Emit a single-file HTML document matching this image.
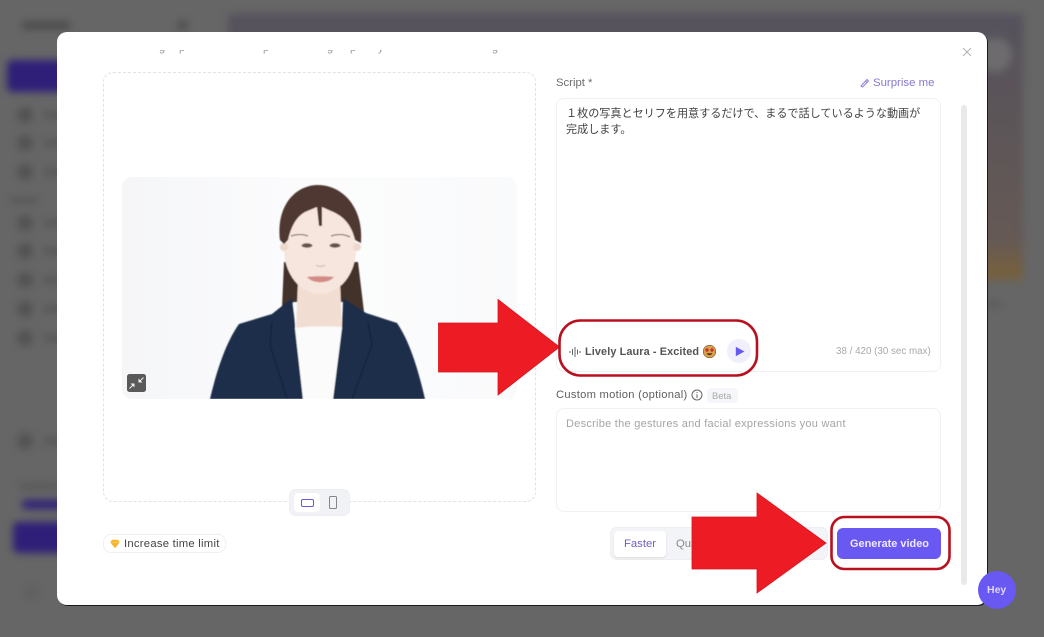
<!DOCTYPE html>
<html><head><meta charset="utf-8"><style>
*{box-sizing:border-box}
html,body{margin:0;padding:0}
body{width:1044px;height:637px;overflow:hidden;position:relative;background:#666;font-family:"Liberation Sans","Noto Sans CJK JP",sans-serif}
.a{position:absolute}
.t{position:absolute;white-space:nowrap;line-height:14px}
#bg{position:absolute;inset:0;filter:blur(4px)}
.ic{position:absolute;left:17px;width:16px;height:16px;border-radius:8px;background:#525252}
.lb{position:absolute;left:44px;width:30px;height:6px;background:#555}
.d{position:absolute;overflow:hidden;height:4px;top:50px;width:8px;color:#999;font-size:11px;line-height:0}
.d span{position:absolute;left:0;top:-2px;line-height:0}
.box{position:absolute;background:#fff;border:1px solid #f1f1f3;border-radius:8px}
</style></head><body>
<div id="bg">
<div class="a" style="left:228px;top:14px;width:795px;height:266px;background:linear-gradient(180deg,#55525d 0%,#5c5558 40%,#655955 85%,#75603f 97%,#75603f 100%)"></div>
<div class="a" style="left:978px;top:38px;width:34px;height:34px;border-radius:50%;background:#6d6b6e"></div>
<div class="a" style="left:22px;top:22px;width:48px;height:7px;background:#484848"></div>
<div class="a" style="left:178px;top:21px;width:9px;height:9px;background:#4d4d4d"></div>
<div class="a" style="left:7px;top:60px;width:70px;height:32px;border-radius:5px;background:#2f1f78"></div>
<div class="ic" style="top:107px"></div><div class="lb" style="top:112px"></div>
<div class="ic" style="top:135px"></div><div class="lb" style="top:140px"></div>
<div class="ic" style="top:164px"></div><div class="lb" style="top:169px"></div>
<div class="a" style="left:10px;top:198px;width:28px;height:5px;background:#555"></div>
<div class="ic" style="top:215px"></div><div class="lb" style="top:220px"></div>
<div class="ic" style="top:243px"></div><div class="lb" style="top:248px"></div>
<div class="ic" style="top:272px"></div><div class="lb" style="top:277px"></div>
<div class="ic" style="top:301px"></div><div class="lb" style="top:306px"></div>
<div class="ic" style="top:330px"></div><div class="lb" style="top:335px"></div>
<div class="ic" style="top:433px"></div><div class="lb" style="top:438px"></div>
<div class="a" style="left:20px;top:484px;width:40px;height:5px;background:#555"></div>
<div class="a" style="left:22px;top:500px;width:50px;height:9px;border-radius:4px;background:#2f1f78"></div>
<div class="a" style="left:13px;top:522px;width:70px;height:31px;border-radius:5px;background:#2f1f78"></div>
<div class="a" style="left:24px;top:585px;width:15px;height:15px;border-radius:8px;background:#606060"></div>
<div class="a" style="left:985px;top:302px;width:16px;height:5px;background:#585858"></div>
</div>

<div class="a" style="left:58px;top:33px;width:930px;height:573px;border-radius:10px;background:#1a1a1a"></div>
<div class="a" style="left:57px;top:32px;width:930px;height:573px;border-radius:10px;background:#fff"></div>

<div class="d" style="left:159px"><span>g</span></div>
<div class="d" style="left:179px"><span>p</span></div>
<div class="d" style="left:263px"><span>p</span></div>
<div class="d" style="left:327px"><span>g</span></div>
<div class="d" style="left:350px"><span>p</span></div>
<div class="d" style="left:378px"><span>y</span></div>
<div class="d" style="left:492px"><span>g</span></div>

<svg class="a" style="left:962px;top:47px" width="10" height="10" viewBox="0 0 10 10"><path d="M1 1L9 9M9 1L1 9" stroke="#b5b5b5" stroke-width="1.1" fill="none"/></svg>

<div class="a" style="left:103px;top:72px;width:433px;height:430px;border:1px dashed #e2e2e2;border-radius:10px"></div>

<svg class="a" style="left:122px;top:177px;border-radius:10px" width="395" height="222" viewBox="122 177 395 222">
<defs><linearGradient id="g" x1="0" x2="1" y1="0" y2="0"><stop offset="0" stop-color="#f5f6f8"/><stop offset=".5" stop-color="#fcfcfd"/><stop offset="1" stop-color="#f9fafb"/></linearGradient>
<filter id="s"><feGaussianBlur stdDeviation=".5"/></filter></defs>
<rect x="122" y="177" width="395" height="222" fill="url(#g)"/>
<g filter="url(#s)">
<path d="M284 262L282 308L294 302L345 302L364 312L358 262Z" fill="#43302a"/>
<path d="M298 280L296 330L342 330L340 280Z" fill="#f2ddd2"/>
<ellipse cx="320" cy="249" rx="36" ry="45" fill="#f6e6de"/>
<circle cx="284" cy="247" r="4" fill="#efd9cd"/><circle cx="357" cy="247" r="4" fill="#efd9cd"/>
<path d="M280 240C276 205 296 185 318 185C342 185 364 207 361 243L355 240C352 226 344 216 331 211L322 207L322 226L319 226L317 207L305 212C296 217 291 227 288 240L284 244Z" fill="#503730"/>
<path d="M291 236C297 234 303 234 308 236M331 236C337 234 344 234 350 237" stroke="#6f5850" stroke-width="1" fill="none"/>
<ellipse cx="307" cy="245.500" rx="5.500" ry="2.200" fill="#64524b"/><ellipse cx="335" cy="245.500" rx="5.500" ry="2.200" fill="#64524b"/>
<path d="M316 265C319 267 322 267 325 265" stroke="#cdb0a2" stroke-width="1" fill="none"/>
<path d="M307 277C315 276 325 276 334 277C328 284 313 284 307 277Z" fill="#d38b85"/>
<path d="M210 399C215 378 224 345 239 324L272 314L292 298C293 310 295 320 295 328L303 399Z" fill="#1f2d48"/>
<path d="M425 399C420 378 412 345 397 323L366 313L343 298C343 310 342 320 342 328L333 399Z" fill="#1f2d48"/>
<path d="M295 328C311 326 327 326 342 327L333 399L303 399Z" fill="#fbfbfb"/>
<path d="M272 322L270 345L287 399M368 322L372 345L352 399" stroke="#18233a" stroke-width="1.100" fill="none"/>
</g>
<rect x="127" y="374" width="19" height="18" rx="2.500" fill="#5a5a5a"/>
<path d="M138.500 378.500V382.500H142.500ZM134.500 387.500V383.500H130.500Z" fill="#eee"/>
<path d="M140 381L143.500 377.500M133 385L129.500 388.500" stroke="#eee" stroke-width="1" fill="none"/>
</svg>

<div class="a" style="left:290px;top:490px;width:59px;height:25px;border-radius:6px;background:#f1f2f5;box-shadow:0 0 0 1px #eeeef1"></div>
<div class="a" style="left:294px;top:493px;width:26px;height:19px;border-radius:4px;background:#fff"></div>
<div class="a" style="left:301px;top:499px;width:13px;height:8px;border:1.500px solid #6a58d8;border-radius:2px"></div>
<div class="a" style="left:329px;top:496px;width:8px;height:13px;border:1.100px solid #858585;border-radius:1.500px"></div>

<div class="a" style="left:103px;top:534px;width:123px;height:19px;border:1px solid #f0f0f2;border-radius:8px"></div>
<svg class="a" style="left:110px;top:539px" width="10" height="10" viewBox="0 0 10 10"><path d="M2 .8H8L9.800 3.200L5 9.200L.2 3.200Z" fill="#f7b52c"/><path d="M.2 3.200H9.800" stroke="#fbd679" stroke-width=".7"/></svg>
<div class="t" style="left:124px;top:537px;font-size:11.300px;color:#444;letter-spacing:.24px">Increase time limit</div>

<div class="t" style="left:556px;top:76px;font-size:11.300px;color:#6c6c6c">Script *</div>
<svg class="a" style="left:859px;top:77px" width="11" height="11" viewBox="0 0 11 11"><path d="M2 9L8 2.500L9.500 4L3.500 10ZM6.500 4L8 5.500" stroke="#8b80d6" stroke-width="1" fill="none"/></svg>
<div class="t" style="left:873px;top:76px;font-size:11.400px;color:#8578d2">Surprise me</div>

<div class="box" style="left:556px;top:98px;width:385px;height:274px"></div>
<div class="a" style="left:566px;top:105.500px;width:362px;font-size:11.100px;line-height:16px;color:#404040">１枚の写真とセリフを用意するだけで、まるで話しているような動画が<br>完成します。</div>

<svg class="a" style="left:569px;top:346px" width="13" height="12" viewBox="0 0 13 12"><path d="M1 5V7M3.500 3V9M6 1V11M8.500 3.500V8.500M11 5V7" stroke="#666" stroke-width="1" fill="none"/></svg>
<div class="t" style="left:585px;top:345px;font-size:10.900px;font-weight:700;color:#555;letter-spacing:.1px">Lively Laura - Excited</div>
<svg class="a" style="left:703px;top:345px" width="13" height="13" viewBox="0 0 13 13"><circle cx="6.500" cy="6.500" r="6.300" fill="#d9a14a"/><circle cx="6.500" cy="6.500" r="6.300" fill="none" stroke="#6a4a2a" stroke-width=".6"/><circle cx="4" cy="5" r="1.700" fill="#c4352b"/><circle cx="9" cy="5" r="1.700" fill="#c4352b"/><path d="M3.500 8.200C5 10.800 8 10.800 9.500 8.200Z" fill="#5a2e1e"/></svg>
<div class="a" style="left:727px;top:339px;width:24px;height:24px;border-radius:50%;background:#f1effc"></div>
<svg class="a" style="left:735px;top:346px" width="10" height="11" viewBox="0 0 10 11"><path d="M.8 .8L9.400 5.500L.8 10.200Z" fill="#6a58f2"/></svg>
<div class="t" style="left:836px;top:345px;font-size:9.800px;color:#a9a9a9">38 / 420 (30 sec max)</div>

<div class="t" style="left:556px;top:388px;font-size:11.200px;color:#5f5f5f;letter-spacing:.27px">Custom motion (optional)</div>
<svg class="a" style="left:691px;top:389px" width="12" height="12" viewBox="0 0 12 12"><circle cx="6" cy="6" r="5" fill="none" stroke="#666" stroke-width="1"/><path d="M6 5.200V9M6 3V4" stroke="#666" stroke-width="1"/></svg>
<div class="a" style="left:707px;top:388px;width:31px;height:15px;border-radius:4px;background:#f5f6f9"></div>
<div class="t" style="left:712px;top:389px;font-size:9.400px;color:#aaa">Beta</div>

<div class="box" style="left:556px;top:408px;width:385px;height:104px"></div>
<div class="t" style="left:566px;top:417px;font-size:11px;color:#a5a5a5;letter-spacing:.26px">Describe the gestures and facial expressions you want</div>

<div class="a" style="left:611px;top:528px;width:216px;height:31px;border-radius:6px;background:#f3f4f7;box-shadow:0 0 0 1px #eeeef1"></div>
<div class="a" style="left:614px;top:531px;width:52px;height:26px;border-radius:4px;background:#fff;box-shadow:0 1px 2px #ddd"></div>
<div class="t" style="left:624px;top:537px;font-size:11.300px;color:#6f60c9">Faster</div>
<div class="t" style="left:676px;top:537px;font-size:11.300px;color:#888">Quality</div>

<div class="a" style="left:961px;top:105px;width:5.500px;height:480px;background:#e9e9e9;border-radius:3px"></div>

<div class="a" style="left:837px;top:528px;width:104px;height:31px;border-radius:6px;background:#6a58f2"></div>
<div class="t" style="left:850px;top:537px;font-size:10.900px;font-weight:700;color:#eeeaff;letter-spacing:.02px">Generate video</div>

<div class="a" style="left:978px;top:571px;width:38px;height:38px;border-radius:50%;background:#6a58f2"></div>
<div class="t" style="left:987px;top:583px;font-size:10.500px;font-weight:700;color:#ddd8ff">Hey</div>

<svg class="a" style="left:0;top:0" width="1044" height="637" viewBox="0 0 1044 637">
<path d="M438.500 323H498V299.500L559.500 347L498 395V372H438.500Z" fill="#ed1c24" stroke="#d8141c" stroke-width=".8"/>
<path d="M692 517H757V493L826 543L757 593V569H692Z" fill="#ed1c24" stroke="#d8141c" stroke-width=".8"/>
<rect x="559.500" y="320.500" width="197.500" height="55" rx="21" fill="none" stroke="#b8101f" stroke-width="2.600"/>
<rect x="831.500" y="517" width="118" height="52" rx="13" fill="none" stroke="#b8101f" stroke-width="2.600"/>
</svg>
</body></html>
